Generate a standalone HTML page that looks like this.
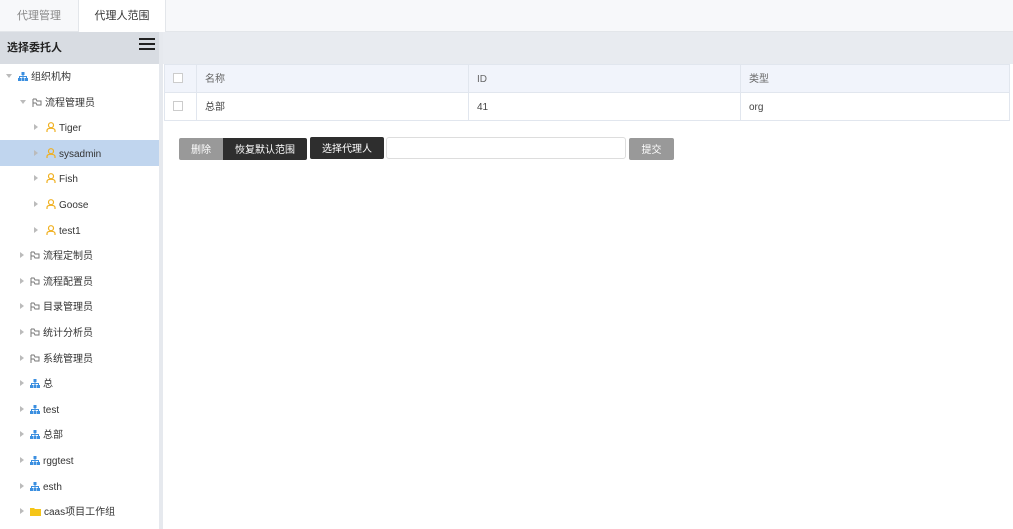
<!DOCTYPE html>
<html><head><meta charset="utf-8"><style>
*{margin:0;padding:0;box-sizing:border-box}
body{width:1013px;height:529px;overflow:hidden;background:#fff;font-family:"Liberation Sans","Noto Sans CJK SC",sans-serif;font-size:10px;color:#333;position:relative}
.tabs{position:absolute;left:0;top:0;width:1013px;height:32px;background:#f7f8fa;border-bottom:1px solid #e3e6ea}
.tab{position:absolute;top:0;height:32px;display:flex;align-items:center;justify-content:center;font-size:11px;line-height:14px}
.left{position:absolute;left:0;top:32px;width:159px;height:497px;background:#fff}
.lh{height:32px;background:#d8dce2;font-weight:bold;font-size:11px;display:flex;align-items:center;padding-left:7px;color:#222;position:relative;line-height:14px}
.sep{position:absolute;left:159px;top:32px;width:4px;height:497px;background:#e6e9ee}
.strip{position:absolute;left:163px;top:32px;width:850px;height:32px;background:#e8ebf0}
.row{position:absolute;left:0;width:159px;height:26px;display:flex;align-items:center;white-space:nowrap;line-height:12px}
.row b{font-weight:normal;display:block;height:12px;line-height:12px;position:relative;top:2px}
.tri{display:block;width:0;height:0;border-left:4px solid #bbb;border-top:3.5px solid transparent;border-bottom:3.5px solid transparent;margin-right:6px}
.tri.d{border-top:4px solid #bbb;border-left:3.5px solid transparent;border-right:3.5px solid transparent;border-bottom:0}
.ic{display:block;margin-right:3px;flex:none}
table{position:absolute;left:164px;top:64px;width:846px;border-collapse:collapse}
td{border:1px solid #e1e6ee;height:28px;padding-left:8px;padding-top:2px;color:#444;vertical-align:middle;line-height:12px}
tr.h td{background:#f1f4fb;color:#666}
.cb{width:10px;height:10px;border:1px solid #ccc;background:#fff;display:inline-block;vertical-align:middle;position:relative;top:-1px}
.btn{position:absolute;top:138px;height:22px;line-height:22px;text-align:center;color:#fff;font-size:10px}
.btn span{display:inline-block;line-height:12px;vertical-align:middle;position:relative;top:3px}
</style></head><body>
<div class="tabs">
<div class="tab" style="left:0;width:78px;color:#888">代理管理</div>
<div class="tab" style="left:78px;width:88px;background:#fff;color:#333;border-left:1px solid #e3e6ea;border-right:1px solid #e3e6ea">代理人范围</div>
</div>
<div class="left">
<div class="lh">选择委托人<span style="position:absolute;left:139px;top:6px;width:16px"><i style="display:block;height:2px;background:#222;margin-bottom:3px"></i><i style="display:block;height:2px;background:#222;margin-bottom:3px"></i><i style="display:block;height:2px;background:#222"></i></span></div>
</div>
<div class="sep"></div><div class="strip"></div>
<div id="tree"></div>
<script>
var org='<svg class="ic" width="10" height="9" viewBox="0 0 10 9"><rect x="3.5" y="0" width="3" height="3" fill="#3b8fe0"/><rect x="0" y="6" width="3" height="3" fill="#3b8fe0"/><rect x="3.5" y="6" width="3" height="3" fill="#3b8fe0"/><rect x="7" y="6" width="3" height="3" fill="#3b8fe0"/><path d="M5 3v3M1.5 6V4.5h7V6" stroke="#3b8fe0" fill="none"/></svg>';
var role='<svg class="ic" width="10" height="9" viewBox="0 0 10 9"><path d="M1 1v8M1 1h3l1 2h4v4H5L4 5H1" stroke="#777" fill="none"/></svg>';
var usr='<svg class="ic" width="10" height="10" viewBox="0 0 10 10" style="margin-left:2px"><circle cx="5" cy="3.2" r="2.5" stroke="#f0b020" fill="none" stroke-width="1.2"/><path d="M1 10V8.5C1 7 2.5 6.3 5 6.3S9 7 9 8.5V10" stroke="#f0b020" fill="none" stroke-width="1.2"/></svg>';
var fold='<svg class="ic" width="11" height="9" viewBox="0 0 11 9"><path d="M0 1h4l1 1h6v7H0z" fill="#f5c518"/></svg>';
var items=[[0,1,org,'组织机构'],[1,1,role,'流程管理员'],[2,0,usr,'Tiger'],[2,0,usr,'sysadmin',1],[2,0,usr,'Fish'],[2,0,usr,'Goose'],[2,0,usr,'test1'],[1,0,role,'流程定制员'],[1,0,role,'流程配置员'],[1,0,role,'目录管理员'],[1,0,role,'统计分析员'],[1,0,role,'系统管理员'],[1,0,org,'总'],[1,0,org,'test'],[1,0,org,'总部'],[1,0,org,'rggtest'],[1,0,org,'esth'],[1,0,fold,'caas项目工作组']];
var h='';items.forEach(function(it,i){var y=Math.round(63+i*25.6);h+='<div class="row" style="top:'+y+'px;padding-left:'+(6+it[0]*14)+'px;'+(it[4]?'background:#c0d5ee;':'')+'"><span class="tri'+(it[1]?' d':'')+'"></span>'+it[2]+'<b>'+it[3]+'</b></div>';});
document.getElementById('tree').innerHTML=h;
</script>
<table>
<tr class="h"><td style="width:32px"><span class="cb"></span></td><td style="width:272px">名称</td><td style="width:272px">ID</td><td>类型</td></tr>
<tr><td><span class="cb"></span></td><td>总部</td><td>41</td><td>org</td></tr>
</table>
<div class="btn" style="left:179px;width:44px;background:#999;border-radius:2px 0 0 2px"><span>删除</span></div>
<div class="btn" style="left:223px;width:84px;background:#2e2e2e;border-radius:0 2px 2px 0"><span>恢复默认范围</span></div>
<div class="btn" style="left:310px;width:74px;background:#2e2e2e;border-radius:2px;top:137px"><span>选择代理人</span></div>
<div style="position:absolute;left:386px;top:137px;width:240px;height:22px;border:1px solid #ddd;border-radius:3px"></div>
<div class="btn" style="left:629px;width:45px;background:#999;border-radius:2px"><span>提交</span></div>
</body></html>
